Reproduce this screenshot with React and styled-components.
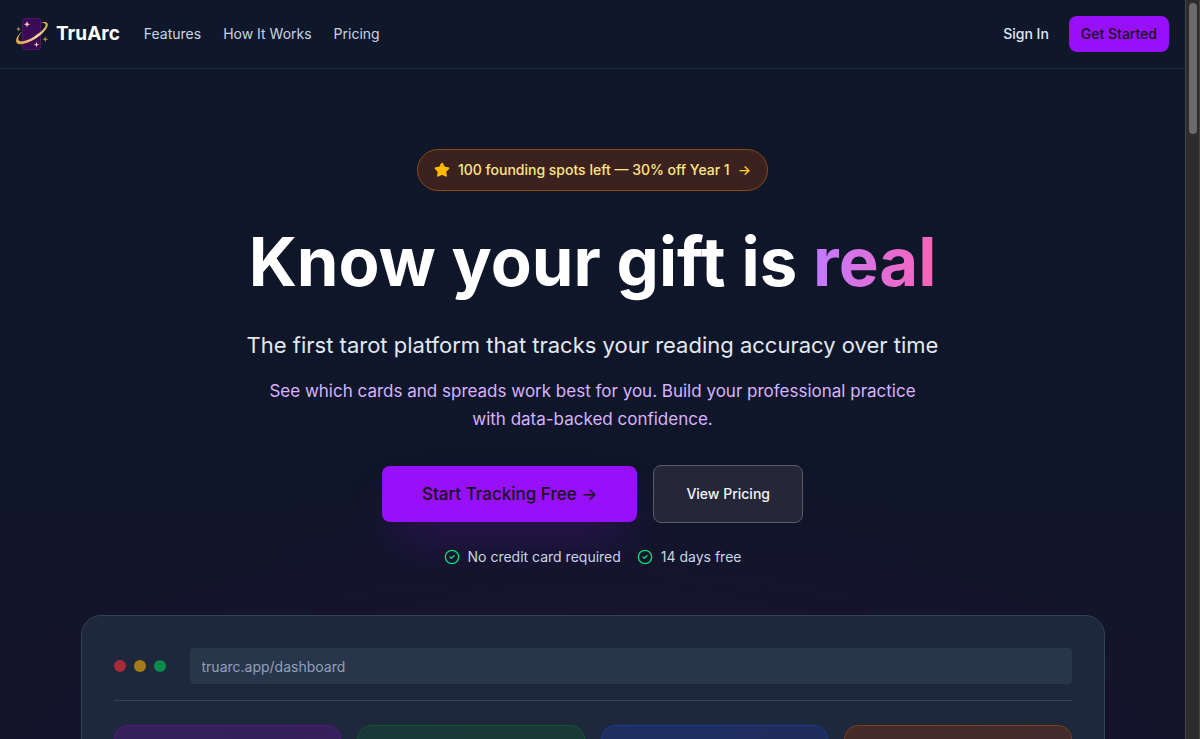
import React from 'react';
import styled, { createGlobalStyle } from 'styled-components';
import { CircleCheck, Star } from 'lucide-react';

const stats = ['purple', 'green', 'blue', 'orange'];

const tones = {
  purple: { border: '#59168b', from: '#35205a', to: '#351e5c' },
  green: { border: '#14532d', from: '#1a3838', to: '#173a35' },
  blue: { border: '#1c398e', from: '#1e2e60', to: '#1e2b5c' },
  orange: { border: '#7e3f12', from: '#452b28', to: '#412b2c' },
};

const Logo = () => (
  <svg width="32" height="32" viewBox="0 0 32 32" aria-hidden="true">
    <defs>
      <linearGradient id="ring" x1="0" y1="1" x2="1" y2="0">
        <stop offset="0" stopColor="#d9983a" />
        <stop offset="0.5" stopColor="#f7dfa6" />
        <stop offset="1" stopColor="#d69a3c" />
      </linearGradient>
    </defs>
    <rect x="6.5" y="0.5" width="18" height="31" rx="2.5" fill="#3b0a55" stroke="#511669" />
    <path
      d="M24.500 5.300C28 3.500 31 3.600 31.700 5.800c1 3.400-4.600 10-12 14.600C11.600 25.400 3.400 27.800.8 24.900c-2.300-2.700 1-8 5.200-11.500-2.800 3.300-4.600 7-3.200 8.900 1.900 2.300 8.800.3 15.200-3.600 6.700-4.100 12.200-9.300 11.600-12-.3-1.500-2.300-1.900-5.100-1.400z"
      fill="url(#ring)"
    />
    <path d="M11 3l.8 2.500 2.500.8-2.500.8-.8 2.500-.8-2.500-2.500-.8 2.500-.8z" fill="#f6dfc0" />
    <path d="M20.500 23.600l.7 2.300 2.300.7-2.300.7-.7 2.300-.7-2.300-2.300-.7 2.300-.7z" fill="#f0c9a0" />
    <path d="M2.500 8.600l.6 1.900 1.900.6-1.900.6-.6 1.900-.6-1.900L0 11.100l1.900-.6z" fill="#c08f4a" />
    <path d="M29.300 18.200l.7 2.300 2.300.7-2.300.7-.7 2.300-.7-2.300-2.300-.7 2.300-.7z" fill="#b58b49" />
  </svg>
);

const App = () => {
  return (
    <>
      <GlobalStyle />
      <Window>
        <Page>
          <Header>
            <Brand href="#">
              <Logo />
              TruArc
            </Brand>
            <Nav>
              <NavLink href="#features">Features</NavLink>
              <NavLink href="#how-it-works">How It Works</NavLink>
              <NavLink href="#pricing">Pricing</NavLink>
            </Nav>
            <Actions>
              <SignIn href="#sign-in">Sign In</SignIn>
              <Button>Get Started</Button>
            </Actions>
          </Header>

          <Hero>
            <Badge href="#founding">
              <Star size={16} fill="currentColor" />
              <span>100 founding spots left — 30% off Year 1</span>
              <BadgeArrow>→</BadgeArrow>
            </Badge>
            <Title>
              Know your gift is <Gradient>real</Gradient>
            </Title>
            <Lead>The first tarot platform that tracks your reading accuracy over time</Lead>
            <Sub>
              See which cards and spreads work best for you. Build your professional practice with
              data-backed confidence.
            </Sub>
            <Buttons>
              <Button $large>Start Tracking Free →</Button>
              <OutlineButton>View Pricing</OutlineButton>
            </Buttons>
            <Perks>
              <li>
                <CircleCheck size={16} />
                No credit card required
              </li>
              <li>
                <CircleCheck size={16} />
                14 days free
              </li>
            </Perks>

            <Preview>
              <BrowserBar>
                <Dots>
                  <Dot $color="#a62c3a" />
                  <Dot $color="#a37c17" />
                  <Dot $color="#0b8a49" />
                </Dots>
                <Address aria-label="Address" defaultValue="truarc.app/dashboard" readOnly />
              </BrowserBar>
              <Stats>
                {stats.map((tone) => (
                  <Stat key={tone} $tone={tones[tone]} />
                ))}
              </Stats>
            </Preview>
          </Hero>
        </Page>
        <ScrollTrack>
          <ScrollThumb />
        </ScrollTrack>
      </Window>
    </>
  );
};

export default App;

const GlobalStyle = createGlobalStyle`
    *{
        box-sizing:border-box;
        margin:0;
        padding:0;
    }
    body{
        background:#0f172b;
        color:#fff;
        font-family:Inter, "Liberation Sans", sans-serif;
        font-size:14px;
        line-height:20px;
        -webkit-font-smoothing:antialiased;
    }
    a{
        color:inherit;
        text-decoration:none;
    }
    button, input{
        font:inherit;
    }
`;

const Window = styled.div`
    display:flex;
    height:100vh;
    overflow:hidden;
`;

const Page = styled.div`
    flex:1;
    min-width:0;
    height:100%;
    overflow:hidden;
    display:flex;
    flex-direction:column;
    background:
        radial-gradient(ellipse 56% 36% at 50% 100%, rgba(60, 10, 80, 0.2), transparent),
        linear-gradient(180deg, #0f172b 0%, #0f1629 60%, #14142a 100%);
`;

const Header = styled.header`
    display:flex;
    align-items:center;
    flex-shrink:0;
    padding:16px;
    border-bottom:1px solid #1b2b40;
    background:#0f172b;
`;

const Brand = styled.a`
    display:flex;
    align-items:center;
    gap:8px;
    font-size:19px;
    line-height:28px;
    font-weight:700;
`;

const Nav = styled.nav`
    display:flex;
    gap:22px;
    margin-left:24px;
`;

const NavLink = styled.a`
    color:#cad5e2;
    &:hover{
        color:#fff;
    }
`;

const Actions = styled.div`
    display:flex;
    align-items:center;
    gap:20px;
    margin-left:auto;
`;

const SignIn = styled.a`
    color:#e2e8f0;
    font-weight:500;
`;

const Button = styled.button`
    border:0;
    border-radius:8px;
    background:#9810fa;
    color:#171717;
    cursor:pointer;
    font-weight:500;
    font-size:${(props) => (props.$large ? '17px' : '14px')};
    line-height:${(props) => (props.$large ? '28px' : '20px')};
    padding:${(props) => (props.$large ? '14px 40px' : '8px 12px')};
    box-shadow:${(props) => (props.$large ? '0 24px 48px -12px rgba(152, 16, 250, 0.25)' : 'none')};
`;

const OutlineButton = styled.button`
    border:1px solid #5a5b6a;
    border-radius:8px;
    background:#252739;
    color:#f1f5f9;
    cursor:pointer;
    font-weight:500;
    padding:18px 32px;
`;

const Hero = styled.main`
    display:flex;
    flex-direction:column;
    align-items:center;
    flex-shrink:0;
    padding:80px 16px 0;
    text-align:center;
`;

const Badge = styled.a`
    display:flex;
    align-items:center;
    gap:8px;
    padding:10px 16px;
    border:1px solid #8a470f;
    border-radius:24px;
    background:#3c221f;
    color:#fee685;
    font-weight:500;
    svg{
        color:#ffb900;
    }
`;

const BadgeArrow = styled.span`
    color:#ffd230;
`;

const Title = styled.h1`
    margin-top:32px;
    font-size:67px;
    line-height:78px;
    font-weight:700;
`;

const Gradient = styled.span`
    background:linear-gradient(90deg, #c27aff, #fb64b6);
    background-clip:text;
    -webkit-background-clip:text;
    color:transparent;
`;

const Lead = styled.p`
    margin-top:28px;
    color:#e2e8f0;
    font-size:22px;
    line-height:32px;
`;

const Sub = styled.p`
    max-width:672px;
    margin-top:16px;
    color:#dab2ff;
    font-size:17px;
    line-height:28px;
`;

const Buttons = styled.div`
    display:flex;
    align-items:center;
    gap:16px;
    margin-top:32px;
`;

const Perks = styled.ul`
    display:flex;
    gap:16px;
    margin-top:24px;
    list-style:none;
    color:#cad5e2;
    li{
        display:flex;
        align-items:center;
        gap:8px;
    }
    svg{
        color:#05df72;
    }
`;

const Preview = styled.section`
    width:100%;
    max-width:1024px;
    margin-top:48px;
    padding:32px;
    border:1px solid #314158;
    border-radius:20px;
    background:#1d283c;
`;

const BrowserBar = styled.div`
    display:flex;
    align-items:center;
    gap:24px;
    padding-bottom:16px;
    border-bottom:1px solid #314158;
`;

const Dots = styled.div`
    display:flex;
    gap:8px;
`;

const Dot = styled.span`
    width:12px;
    height:12px;
    border-radius:50%;
    background:${(props) => props.$color};
`;

const Address = styled.input`
    flex:1;
    min-width:0;
    height:36px;
    padding:0 12px;
    border:0;
    border-radius:4px;
    outline:0;
    background:#29354b;
    color:#90a1b9;
`;

const Stats = styled.div`
    display:grid;
    grid-template-columns:repeat(4, minmax(0, 1fr));
    gap:16px;
    padding-top:24px;
`;

const Stat = styled.div`
    height:112px;
    border:1px solid ${(props) => props.$tone.border};
    border-radius:14px;
    background:linear-gradient(135deg, ${(props) => props.$tone.from}, ${(props) => props.$tone.to});
`;

const ScrollTrack = styled.div`
    flex-shrink:0;
    width:15px;
    padding:3px;
    border-left:1px solid #454545;
    border-right:1px solid #454545;
    background:#2c2c2c;
`;

const ScrollThumb = styled.div`
    width:8px;
    height:131px;
    border-radius:4px;
    background:#6b6b6b;
`;
